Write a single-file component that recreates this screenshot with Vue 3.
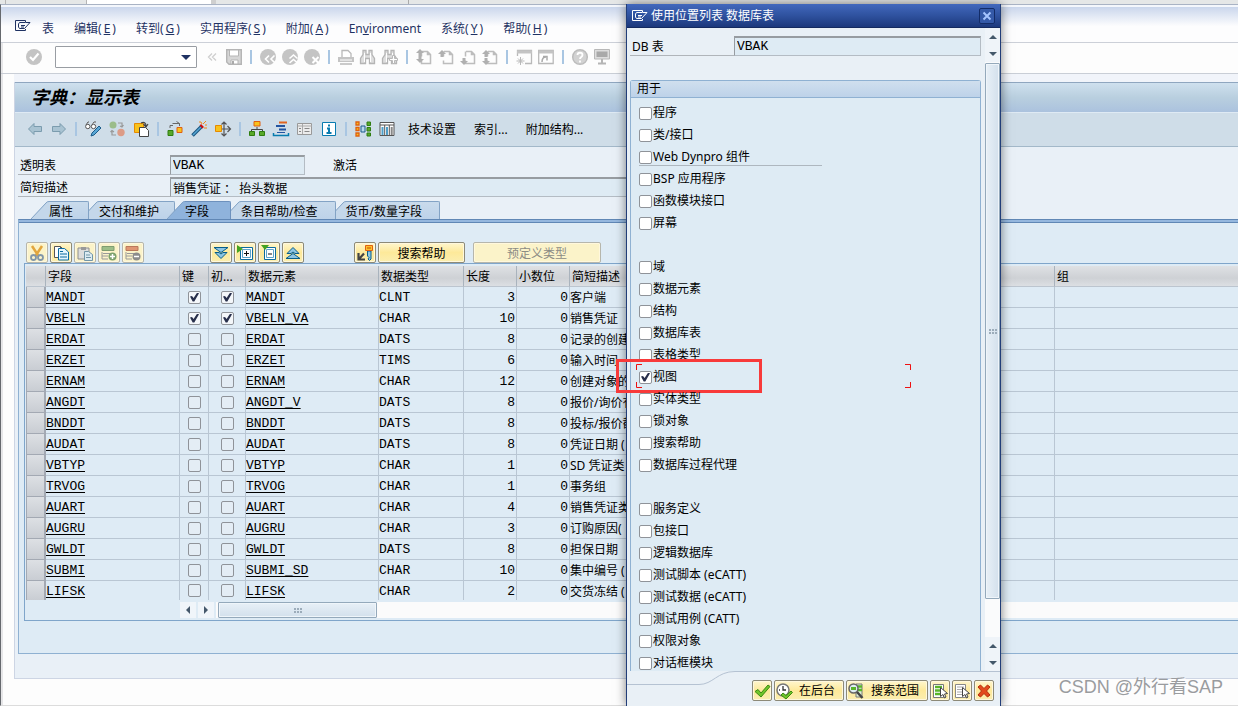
<script setup>
import { ref } from 'vue'

const menus = [
  { label: '表' },
  { label: '编辑', key: 'E' },
  { label: '转到', key: 'G' },
  { label: '实用程序', key: 'S' },
  { label: '附加', key: 'A' },
  { label: 'Environment', plain: true },
  { label: '系统', key: 'Y' },
  { label: '帮助', key: 'H' }
]

const page = '<path d="M6 2.5h5.500l3 3v9h-9v-3M5.500 7.500v-5M11.500 2.500v3h3" fill="none" stroke="#bdbdbd" stroke-width="1.500"/>'
const up = (x, y) => `<path d="M${x} ${y}l4 4h-2.500v3h-3v-3h-2.500z" fill="#b0b0b0"/>`
const down = (x, y) => `<path d="M${x} ${y}l4-4h-2.500v-3h-3v3h-2.500z" fill="#b0b0b0"/>`
const disc = '<circle cx="8" cy="8" r="8" fill="#c4c4c4"/>'
const binoculars = '<path d="M3 1.500h3v4h3v-4h3v4l2.500 4v5h-5v-5h-4v5h-5v-5L3 5.500z" fill="#dedede" stroke="#b5b5b5" stroke-width="1.300"/><path d="M4.500 4v9M10.500 4v9" stroke="#fff"/>'
const doc = (x, y) => `<path d="M${x + 0.5} ${y + 0.5}h6l3 3v8h-9z" fill="#fff" stroke="#555"/><path d="M${x + 6.5} ${y + 0.5}v3h3" fill="none" stroke="#555"/>`

const icons = {
  leave: '<path d="M10.500 4V2.500H.5v10h10V11" fill="none" stroke="currentColor"/><path d="M10.500 4.500H4.500L3.500 6v3l1 1.500h5L15 4.500zM6 7.500h4M6 9h3" fill="none" stroke="currentColor"/>',
  ok: disc + '<path d="M4 8l3 3 5.500-6.500" fill="none" stroke="#fff" stroke-width="2.200"/>',
  chevrons: '<path d="M8 4.500L4.500 8 8 11.500M12 4.500L8.500 8l3.500 3.500" fill="none" stroke="#cfcfcf" stroke-width="1.300"/>',
  save: '<path d="M.7.7h14.600v14.600H3L.7 13z" fill="#d6d6d6" stroke="#b5b5b5" stroke-width="1.400"/><path d="M3.500 1h9v6h-9z" fill="#fff" stroke="#b5b5b5"/><path d="M5 11h7v4H5z" fill="#fff" stroke="#b5b5b5"/><path d="M7 12v3" stroke="#aaa" stroke-width="2"/>',
  back: disc + '<path d="M9 6.500L5.500 10 9 13.500M14.500 6.500L11 10l3.500 3.500" fill="none" stroke="#fff" stroke-width="1.600"/>',
  exit: disc + '<path d="M7.500 9.500L11.500 6l4 3.500M7.500 14l4-3.500 4 3.500" fill="none" stroke="#fff" stroke-width="1.600"/>',
  cancel: disc + '<path d="M8.500 8l6 6M14.500 8l-6 6" stroke="#fff" stroke-width="2"/>',
  print: '<path d="M4 8V1.500h6l3 3V8" fill="#fff" stroke="#b9b9b9" stroke-width="1.300"/><path d="M0 8h16v5H0z" fill="#c4c4c4"/><path d="M2 11h12" stroke="#fff"/><path d="M2 15h12" stroke="#b9b9b9" stroke-width="1.500"/>',
  find: binoculars,
  findNext: binoculars + '<path d="M10.500 6.500h2v3h3v2h-3v3h-2v-3h-3v-2h3z" fill="#fff" stroke="#b9b9b9"/>',
  first: page + up(4, 0) + down(4, 14),
  prev: page + up(4, 1),
  next: page + down(4, 16),
  last: page + up(4, 1) + down(4, 16),
  session: '<path d="M1.500 7V1.500h14v13H9" fill="none" stroke="#b9b9b9" stroke-width="1.300"/><path d="M1 3h15" stroke="#c4c4c4" stroke-width="3"/><path d="M4.500 8v8M.5 12h8M2 9.500l5 5M7 9.500l-5 5" stroke="#b9b9b9"/>',
  shortcut: '<path d="M.7 1.500h14.500v13H.7z" fill="#fff" stroke="#b9b9b9" stroke-width="1.300"/><path d="M1 3h14" stroke="#c4c4c4" stroke-width="3"/><path d="M4 13c0-3 1-5 4-5M5 7.500h4v4" fill="none" stroke="#aaa" stroke-width="1.500"/>',
  help: '<circle cx="8" cy="8" r="7.300" fill="#d2d2d2" stroke="#bcbcbc" stroke-width="1.500"/><path d="M5.500 6c0-3 5-3 5 0 0 2-2.500 2-2.500 4M8 11.500v2" fill="none" stroke="#fff" stroke-width="1.800"/>',
  monitor: '<path d="M.5.500h15v9.500H.5z" fill="#ddd" stroke="#b8b8b8"/><path d="M2.500 2.500h11v5.500h-11z" fill="#a9a9a9"/><path d="M8 10v4M4 14.500h8" stroke="#b5b5b5" stroke-width="2"/>',
  arrowLeft: '<path d="M1.500 8l5.500-5.500v3h7.500v5H7v3z" fill="#a9c3d2" stroke="#7b9cae"/>',
  arrowRight: '<path d="M14.500 8L9 2.500v3H1.500v5H9v3z" fill="#a9c3d2" stroke="#7b9cae"/>',
  display: '<g fill="#fff" stroke="#555"><circle cx="2.800" cy="5.500" r="2.200"/><circle cx="8.500" cy="5.500" r="2.200"/><path d="M1 4l2-3h1M7 4l2-3h2"/></g><path d="M6 15l1-3 7-7 2 2-7 7z" fill="#58a6d4" stroke="#1c5c8a"/>',
  toggle: '<circle cx="4" cy="4" r="3.500" fill="#9bbd8a"/><circle cx="12" cy="11.500" r="3.700" fill="#dc9b86"/><path d="M9 2h4v4M11 5l2 1 1.500-2M7 14H3v-4M1.500 11L3 9.500 5 11" fill="none" stroke="#999" stroke-width="1.200"/>',
  other: '<path d="M1.500 2.500h9v9h-9z" fill="#f8c21c" stroke="#e68a00"/><path d="M6.500 6.500h6l3 3v6h-9z" fill="#fff" stroke="#444"/><path d="M8 2c3-1.500 5 0 5 3M10.500 3l2.500 3L15 3" fill="none" stroke="#444" stroke-width="1.200"/>',
  copyObj: '<path d="M1 9.500h5v5H1z" fill="#58a82a" stroke="#2f7d10"/><path d="M10 6.500h5v5h-5z" fill="#f8c21c" stroke="#e06010"/><path d="M3 7V4.500h3M5.500 2.500h7V5M9.500.5l3 2" fill="none" stroke="#666"/>',
  wand: '<path d="M1.500 14.500l9-9" stroke="#1a5680" stroke-width="3.500"/><path d="M2 14l8-8" stroke="#57a7d5" stroke-width="1.500"/><path d="M10 6l1.500-1.500" stroke="#d01010" stroke-width="4"/><path d="M9 2V0M13 7h3M12 3l3-3M14 4h2M10 1l1 2" stroke="#f08a18"/>',
  where: '<path d="M.5 4.500h6v6h-6z" fill="#f8c21c" stroke="#e68a00"/><path d="M7 8h8M9 1v14M6.500 3.500L9 1l2.500 2.500M6.500 12.500L9 15l2.500-2.500M12.500 5l3 3-3 3" fill="none" stroke="#555" stroke-width="1.200"/>',
  hierarchy: '<path d="M8 6v3M2.500 11V8.500h11V11" fill="none" stroke="#444"/><path d="M5 .5h6v4.500H5z" fill="#f8c21c" stroke="#e06010"/><path d="M.5 10.500h5v4h-5zM10.500 10.500h5v4h-5z" fill="#58a82a" stroke="#2f7d10"/>',
  append: '<path d="M6 1.500h8" stroke="#e06420" stroke-width="2"/><path d="M3 5h9M6 8.500h7" stroke="#2354a0" stroke-width="2"/><path d="M4 11.500h8" stroke="#2354a0"/><path d="M.5 12v2.500h15V12" fill="none" stroke="#077cae" stroke-width="1.500"/>',
  list: '<path d="M.5 2.500h14v11H.5z" fill="#ececec" stroke="#999"/><path d="M1 5h14M5.500 3v10" stroke="#aaa"/><path d="M7.500 7.500h5M7.500 10.500h5M2 7.500h2M2 10.500h2" stroke="#888"/>',
  info: '<path d="M1.500 1.500h13v13h-13z" fill="#fff" stroke="#087bb0"/><path d="M8 3.500v2M6 7.500h2V12M5.500 12h5" fill="none" stroke="#087bb0" stroke-width="2"/>',
  indexes: '<g fill="#f8c21c" stroke="#e06010" stroke-width="1.300"><path d="M1 1h3v3H1zM1 6.500h3v3H1zM1 12h3v3H1z"/></g><path d="M6 5h4v6H6z" fill="#b7d8ec" stroke="#1c5c8a"/><g fill="#58a82a" stroke="#2f7d10"><path d="M12 1h3.500v3.500H12zM12 6.500h3.500v3.500H12zM12 12h3.500v3H12z"/></g>',
  contents: '<path d="M1 1.500h14v13H1z" fill="#fff" stroke="#555"/><path d="M1 4h14M5.700 4v11M10.300 4v11" stroke="#555"/><path d="M3.500 6v8M8 6v8" stroke="#4d9dc8" stroke-width="2"/><path d="M12.700 6v8" stroke="#888" stroke-width="2"/>',
  cut: '<path d="M3 1l6.500 10M13 1L6.500 11" stroke="#e2a63e" stroke-width="2.500"/><g fill="none" stroke="#8196a8" stroke-width="1.800"><circle cx="4.500" cy="12.500" r="2.500"/><circle cx="11.500" cy="12.500" r="2.500"/></g>',
  copy: doc(1, 1) + '<path d="M5.500 3.500h6l4 3.500v8h-10z" fill="#e6f5fd" stroke="#0b6ba0"/><path d="M7 6.500h3M7 9h7M7 12h7" stroke="#0b6ba0"/>',
  paste: '<path d="M1 3h11v11H1z" fill="#ddd" stroke="#8f8f8f"/><path d="M4 2h5v3H4z" fill="#999"/><path d="M7.500 6.500h4l4 3v6h-8z" fill="#dcebf2" stroke="#7195a8"/><path d="M9 10h4M9 12.500h5" stroke="#7195a8"/>',
  addRow: '<path d="M1 1.500h12v4H1z" fill="#9cbe88" stroke="#7f9d70"/><path d="M1 7v7h6M2 8.500h9M1 11h6" fill="none" stroke="#999"/><circle cx="11.500" cy="11.500" r="4" fill="#7da26d"/><path d="M11.500 9v5M9 11.500h5" stroke="#fff" stroke-width="1.500"/>',
  delRow: '<path d="M1 1.500h12v4H1z" fill="#e09672" stroke="#ba795c"/><path d="M1 7v7h6M2 8.500h9M1 11h6" fill="none" stroke="#999"/><circle cx="11.500" cy="11.500" r="4" fill="#8c8c8c"/><path d="M9 11.500h5" stroke="#fff" stroke-width="1.500"/>',
  dblDown: '<path d="M1 2.500h14l-7 5z" fill="#8dc5e4" stroke="#075d89"/><path d="M2 7.500h4l2 1.500 2-1.500h4l-6 6z" fill="#8dc5e4" stroke="#075d89"/>',
  dblUp: '<path d="M1 13.500h14l-7-5z" fill="#8dc5e4" stroke="#075d89"/><path d="M2 8.500h4L8 7l2 1.500h4l-6-6z" fill="#8dc5e4" stroke="#075d89"/>',
  expand: '<path d="M3.500 2.500h12v12h-12z" fill="#fff" stroke="#0b6ba0"/><path d="M5.500 4.500h8v8h-8z" fill="#fff" stroke="#5ea4c8"/><path d="M7 8.500h5M9.500 6v5" stroke="#111"/><path d="M0 0l6 4-6 4z" fill="#45a321"/>',
  collapse: '<path d="M3.500 2.500h11v12h-11z" fill="#fff" stroke="#0b6ba0"/><path d="M5.500 4.500h7v8h-7z" fill="#fff" stroke="#5ea4c8"/><path d="M7 9h4" stroke="#111"/><path d="M0 0h8L4 5z" fill="#45a321"/>',
  key: '<path d="M7 8.500L2 14M1.500 8v6.500H8" fill="none" stroke="#444" stroke-width="2.200"/><path d="M10.500 6h3.500v8l-1.500 1.500L11 14l1-1.500-1.500-1.500z" fill="#8dc5e4" stroke="#075d89"/><path d="M8.500.500h7v5h-7z" fill="#fbc02d" stroke="#e06010"/><path d="M10 3h4" stroke="#c44f00"/>',
  check: '<path d="M1 8.500l3-2 3 3.500L14 2l2 1.500L7 14z" fill="#6fc52b" stroke="#3b8a10"/>',
  background: '<circle cx="7" cy="7" r="6" fill="#fff" stroke="#777" stroke-width="1.500"/><path d="M7 3v4h3M3 7h1" fill="none" stroke="#333" stroke-width="1.300"/><path d="M5 12l2-2 3 2.500L15 8l1.500 1.500L10 16z" fill="#6fc52b" stroke="#3b8a10"/>',
  scope: '<path d="M8 1h6v13H8z" fill="#dff2d5" stroke="#777"/><path d="M9 3.500h5M9 7h5" stroke="#5ab52a" stroke-width="2.500"/><circle cx="5.500" cy="5.500" r="4.500" fill="#dfeef2" stroke="#666" stroke-width="1.500"/><path d="M9 9l5.500 6" stroke="#444" stroke-width="2.500"/><path d="M3 5.500h5" stroke="#5ab52a" stroke-width="3"/>',
  selectAll: '<path d="M1.500 1.500h10v13h-10z" fill="#fff" stroke="#777"/><path d="M3 4h7M3 7.500h6M3 11h6" stroke="#5ab52a" stroke-width="2.500"/><path d="M8.500 4.500v9l2.500-2 1.500 3.500 1.500-1-1.500-3 3-.5z" fill="#fff" stroke="#444"/>',
  deselect: '<path d="M1.500 1.500h10v13h-10z" fill="#fff" stroke="#888"/><path d="M3 4h7M3 6.500h5M3 9h5M3 11.500h5" stroke="#aaa"/><path d="M8.500 4.500v9l2.500-2 1.500 3.500 1.500-1-1.500-3 3-.5z" fill="#fff" stroke="#444"/>',
  cross: '<path d="M2 4l2.500-2L8 5.500 11.500 2 14 4l-3.500 4 3.500 4-2.500 2L8 10.500 4.500 14 2 12l3.500-4z" fill="#e24a1c" stroke="#b42c08"/>'
}

const systemBar = [
  ['save', '保存'], null,
  ['back', '返回'], ['exit', '退出'], ['cancel', '取消'], null,
  ['print', '打印'], ['find', '查找'], ['findNext', '查找下一个'], null,
  ['first', '第一页'], ['prev', '上一页'], ['next', '下一页'], ['last', '最后一页'], null,
  ['session', '新建会话'], ['shortcut', '创建快捷方式'], null,
  ['help', '帮助'], ['monitor', '定制本地布局']
]
const appBar = [
  ['arrowLeft', '上一对象'], ['arrowRight', '下一对象'], null,
  ['display', '显示/更改'], ['toggle', '激活/未激活'], ['other', '其他对象'], null,
  ['copyObj', '检查'], ['wand', '激活'], ['where', '使用位置列表'], null,
  ['hierarchy', '层次'], ['append', '追加'], ['list', '列表'], ['info', '信息'], null,
  ['indexes', '图形'], ['contents', '内容']
]
const appTexts = ['技术设置', '索引...', '附加结构...']

const tabs = ['属性', '交付和维护', '字段', '条目帮助/检查', '货币/数量字段']
const activeTab = ref(2)

const editTools = [['cut', '剪切'], ['copy', '复制'], ['paste', '粘贴'], ['addRow', '插入行'], ['delRow', '删除行']]
const treeTools = [['dblDown', '全部展开'], ['expand', '展开'], ['collapse', '折叠'], ['dblUp', '全部折叠']]

const columns = ['字段', '键', '初...', '数据元素', '数据类型', '长度', '小数位', '简短描述', '组']
const rows = ref([
  { name: 'MANDT', key: true, el: 'MANDT', type: 'CLNT', len: 3, text: '客户端' },
  { name: 'VBELN', key: true, el: 'VBELN_VA', type: 'CHAR', len: 10, text: '销售凭证' },
  { name: 'ERDAT', key: false, el: 'ERDAT', type: 'DATS', len: 8, text: '记录的创建' },
  { name: 'ERZET', key: false, el: 'ERZET', type: 'TIMS', len: 6, text: '输入时间' },
  { name: 'ERNAM', key: false, el: 'ERNAM', type: 'CHAR', len: 12, text: '创建对象的' },
  { name: 'ANGDT', key: false, el: 'ANGDT_V', type: 'DATS', len: 8, text: '报价/询价有' },
  { name: 'BNDDT', key: false, el: 'BNDDT', type: 'DATS', len: 8, text: '投标/报价截' },
  { name: 'AUDAT', key: false, el: 'AUDAT', type: 'DATS', len: 8, text: '凭证日期 (' },
  { name: 'VBTYP', key: false, el: 'VBTYP', type: 'CHAR', len: 1, text: 'SD 凭证类' },
  { name: 'TRVOG', key: false, el: 'TRVOG', type: 'CHAR', len: 1, text: '事务组' },
  { name: 'AUART', key: false, el: 'AUART', type: 'CHAR', len: 4, text: '销售凭证类' },
  { name: 'AUGRU', key: false, el: 'AUGRU', type: 'CHAR', len: 3, text: '订购原因(' },
  { name: 'GWLDT', key: false, el: 'GWLDT', type: 'DATS', len: 8, text: '担保日期' },
  { name: 'SUBMI', key: false, el: 'SUBMI_SD', type: 'CHAR', len: 10, text: '集中编号 (' },
  { name: 'LIFSK', key: false, el: 'LIFSK', type: 'CHAR', len: 2, text: '交货冻结 (' }
])

const usageGroups = ref([
  ['程序', '类/接口', 'Web Dynpro 组件', 'BSP 应用程序', '函数模块接口', '屏幕'],
  ['域', '数据元素', '结构', '数据库表', '表格类型', '视图', '实体类型', '锁对象', '搜索帮助', '数据库过程代理'],
  ['服务定义', '包接口', '逻辑数据库', '测试脚本 (eCATT)', '测试数据 (eCATT)', '测试用例 (CATT)', '权限对象', '对话框模块']
].map(g => g.map(label => ({ label, on: label === '视图' }))))
</script>

<template>
  <div class="desktop">
    <div class="strip"><span class="strip-a"></span><span class="strip-b"></span><span class="strip-c"></span></div>

    <main class="window">
      <nav class="menu" aria-label="菜单">
        <svg class="icon" viewBox="0 0 16 16" v-html="icons.leave"></svg>
        <a v-for="m in menus" :key="m.label" href="#"><template v-if="m.plain">En<u>v</u>ironment</template><template v-else>{{ m.label }}<template v-if="m.key">(<span class="mnemonic">{{ m.key }}</span>)</template></template></a>
      </nav>

      <div class="sysbar">
        <button class="tool" aria-label="回车"><svg class="icon" viewBox="0 0 16 16" v-html="icons.ok"></svg></button>
        <div class="command">
          <input type="text" aria-label="命令">
          <button aria-label="命令历史"><i class="tri tri-menu"></i></button>
        </div>
        <button class="tool" aria-label="隐藏命令栏"><svg class="icon" viewBox="0 0 16 16" v-html="icons.chevrons"></svg></button>
        <template v-for="(t, i) in systemBar" :key="i">
          <button v-if="t" class="tool" :aria-label="t[1]"><svg class="icon" viewBox="0 0 16 16" v-html="icons[t[0]]"></svg></button>
          <span v-else class="sep"></span>
        </template>
      </div>

      <section class="frame">
        <h1>字典：显示表</h1>
        <div class="appbar">
          <template v-for="(t, i) in appBar" :key="i">
            <button v-if="t" class="tool" :aria-label="t[1]"><svg class="icon" viewBox="0 0 16 16" v-html="icons[t[0]]"></svg></button>
            <span v-else class="sep"></span>
          </template>
          <button v-for="t in appTexts" :key="t" class="text-tool">{{ t }}</button>
        </div>

        <div class="body">
          <div class="field-row">
            <label for="tab-name">透明表</label>
            <input id="tab-name" class="name" type="text" value="VBAK" readonly>
            <span class="status">激活</span>
          </div>
          <div class="field-row">
            <label for="tab-desc">简短描述</label>
            <input id="tab-desc" class="desc" type="text" value="销售凭证 ： 抬头数据" readonly>
          </div>

          <div class="tabs" role="tablist">
            <button v-for="(t, i) in tabs" :key="t" role="tab" :class="['tab', `tab-${i}`, { active: i === activeTab }]" :aria-selected="i === activeTab" @click="activeTab = i">
              <svg class="slant" viewBox="0 0 18 18"><path class="slant-fill" d="M0 18L15 1.500Q16 0 18 0V18z" /><path class="slant-line" d="M0 18L15 2Q16 .5 18 .5" /></svg>
              <span>{{ t }}</span>
            </button>
          </div>

          <div class="panel">
            <div class="grid-tools">
              <div class="group">
                <button v-for="t in editTools" :key="t[0]" :class="['btn', 'square', { dim: t[0] !== 'copy' }]" :aria-label="t[1]"><svg class="icon" viewBox="0 0 16 16" v-html="icons[t[0]]"></svg></button>
              </div>
              <div class="group tree">
                <button v-for="t in treeTools" :key="t[0]" class="btn square" :aria-label="t[1]"><svg class="icon" viewBox="0 0 16 16" v-html="icons[t[0]]"></svg></button>
              </div>
              <div class="group help">
                <button class="btn square" aria-label="外键"><svg class="icon" viewBox="0 0 16 16" v-html="icons.key"></svg></button>
                <button class="btn search">搜索帮助</button>
              </div>
              <button class="btn predefined dim" disabled>预定义类型</button>
            </div>

            <div class="grid">
              <table>
                <colgroup>
                  <col class="c-sel"><col class="c-name"><col class="c-key"><col class="c-init"><col class="c-el">
                  <col class="c-type"><col class="c-len"><col class="c-dec"><col class="c-text"><col>
                </colgroup>
                <thead>
                  <tr><th></th><th v-for="c in columns" :key="c">{{ c }}</th></tr>
                </thead>
                <tbody>
                  <tr v-for="r in rows" :key="r.name">
                    <td class="sel"></td>
                    <td class="mono"><a href="#">{{ r.name }}</a></td>
                    <td class="tick"><input v-model="r.key" type="checkbox" class="box" :aria-label="r.name + ' 键'"></td>
                    <td class="tick"><input v-model="r.key" type="checkbox" class="box" :aria-label="r.name + ' 初始值'"></td>
                    <td class="mono"><a href="#">{{ r.el }}</a></td>
                    <td class="mono">{{ r.type }}</td>
                    <td class="mono num">{{ r.len }}</td>
                    <td class="mono num">0</td>
                    <td class="short">{{ r.text }}</td>
                    <td></td>
                  </tr>
                </tbody>
              </table>
              <div class="hscroll">
                <button aria-label="向左"><i class="tri tri-left"></i></button>
                <button aria-label="向右"><i class="tri tri-right"></i></button>
                <div class="htrack"><div class="hthumb"><i class="grip"></i></div></div>
              </div>
            </div>
          </div>
        </div>
      </section>
    </main>

    <section class="dialog" role="dialog" aria-labelledby="dlg-title">
      <header>
        <svg class="icon" viewBox="0 0 16 16" v-html="icons.leave"></svg>
        <h2 id="dlg-title">使用位置列表 数据库表</h2>
        <button aria-label="关闭"><svg viewBox="0 0 10 10"><path d="M1.500 1.500l7 7M8.500 1.500l-7 7" /></svg></button>
      </header>
      <div class="dlg-main">
        <div class="dlg-content">
          <div class="db-row">
            <label for="db-table">DB 表</label>
            <input id="db-table" type="text" value="VBAK" readonly>
          </div>
          <fieldset class="usage">
            <legend>用于</legend>
            <ul v-for="(g, gi) in usageGroups" :key="gi">
              <li v-for="u in g" :key="u.label" :class="{ ruled: u.label.startsWith('Web') }">
                <label><input v-model="u.on" type="checkbox" class="box">{{ u.label }}</label>
                <template v-if="u.label === '视图'">
                  <svg class="bracket" viewBox="0 0 6 24"><path d="M6 .5H.5V6M.5 18v5.500H6" /></svg>
                  <svg class="bracket right" viewBox="0 0 6 24"><path d="M0 .5h5.500V6M5.500 18v5.500H0" /></svg>
                  <span class="highlight"></span>
                </template>
              </li>
            </ul>
          </fieldset>
        </div>
        <div class="vscroll">
          <button aria-label="向上"><i class="tri tri-up"></i></button>
          <button aria-label="向下"><i class="tri tri-down"></i></button>
          <div class="vtrack"><div class="vthumb"><i class="grip"></i></div></div>
          <button aria-label="向上翻"><i class="tri tri-up"></i></button>
          <button aria-label="向下翻"><i class="tri tri-down"></i></button>
        </div>
      </div>
      <footer>
        <svg class="curve" viewBox="0 0 108 14"><path d="M0 13.500H72C86 13.500 90 .5 108 .5" /></svg>
        <div class="actions">
          <button class="btn short-btn" aria-label="继续"><svg class="icon" viewBox="0 0 16 16" v-html="icons.check"></svg></button>
          <button class="btn wide-a"><svg class="icon" viewBox="0 0 16 16" v-html="icons.background"></svg>在后台</button>
          <button class="btn wide-b"><svg class="icon" viewBox="0 0 16 16" v-html="icons.scope"></svg>搜索范围</button>
          <button class="btn short-btn" aria-label="全选"><svg class="icon" viewBox="0 0 16 16" v-html="icons.selectAll"></svg></button>
          <button class="btn short-btn" aria-label="取消全选"><svg class="icon" viewBox="0 0 16 16" v-html="icons.deselect"></svg></button>
          <button class="btn short-btn" aria-label="取消"><svg class="icon" viewBox="0 0 16 16" v-html="icons.cross"></svg></button>
        </div>
      </footer>
    </section>

    <div class="watermark">CSDN @外行看SAP</div>
  </div>
</template>

<style>
body { background: #fdfdfd; }
</style>

<style scoped>
* { box-sizing: border-box; }
.desktop {
  position: relative;
  display: flex;
  flex-direction: column;
  min-height: 100vh;
  overflow: hidden;
  font: 12px/16px "Noto Sans", "Noto Sans CJK SC", sans-serif;
  color: #000;
}
button, input { font: inherit; color: inherit; margin: 0; padding: 0; border: 0; background: none; }
a { color: inherit; text-decoration: none; }
.icon { display: block; width: 16px; height: 16px; flex: none; overflow: visible; }

.strip { display: flex; height: 4px; background: #e5e7e7; }
.strip-a { width: 82px; margin-left: 5px; border: solid #b5b5b5; border-width: 0 1px; }
.strip-b { width: 129px; background: #fff; border-right: 5px solid #cfcfcf; }
.strip-c { width: 193px; border-right: 1px solid #aaa; }

.window {
  flex: 1;
  display: flex;
  flex-direction: column;
  border-left: 1px solid #66696e;
  border-top: 1px solid #a9b3c4;
  border-bottom: 1px solid #dcdcdc;
  background: #fdfdfd;
  box-shadow: inset 2px 0 #e6e6e8;
}
.menu {
  display: flex;
  align-items: center;
  gap: 20px;
  height: 38px;
  padding: 8px 0 0 14px;
  border-top: 2px solid #f4f7fc;
  border-bottom: 1px solid #ccd0d8;
  background: linear-gradient(#cad6ec, #fdfdfe 55%);
  color: #1f3263;
}
.menu .icon { margin: -6px -9px 0 0; }
.mnemonic { padding: 0 2px; text-decoration: underline; }

.sysbar {
  display: flex;
  align-items: center;
  gap: 6px;
  height: 31px;
  padding: 0 0 2px 25px;
  border-bottom: 1px solid #c9ced6;
}
.sysbar .sep { margin: 0 2px; }
.tool { flex: none; width: 16px; height: 16px; }
.sep { flex: none; width: 2px; height: 14px; background: #a9c6e2; }
.command {
  display: flex;
  align-items: center;
  width: 142px;
  height: 22px;
  margin: 0 1px 0 7px;
  border: 1px solid #999da3;
  border-radius: 1px;
  background: #fff;
}
.command input { flex: 1; min-width: 0; height: 100%; outline: 0; padding-left: 4px; }
.command button { width: 20px; height: 20px; display: grid; place-items: center; }

.tri { display: block; border: solid transparent; width: 0; height: 0; }
.tri-menu { border-width: 5px 5px 0; border-top-color: #1f3263; }
.tri-left { border-width: 4px 4px 4px 0; border-right-color: #44586b; }
.tri-right { border-width: 4px 0 4px 4px; border-left-color: #44586b; }
.tri-up { border-width: 0 4px 4px; border-bottom-color: #44586b; }
.tri-down { border-width: 4px 4px 0; border-top-color: #44586b; }

.frame {
  margin: 8px 0 0 13px;
  border: solid #cdd5e4;
  border-width: 0 0 1px 1px;
  background: #e9f0f7;
  box-shadow: 0 -8px #f1f4fa;
}
h1 {
  margin: 0;
  height: 31px;
  padding: 0 0 4px 16px;
  border-top: 1px solid #8fa6bf;
  border-bottom: 1px solid #dfeaf4;
  background: linear-gradient(#cfe0ee, #b9cfdf 50%, #abc2de);
  font: italic bold 18px/26px "Noto Sans CJK SC", sans-serif;
}
.appbar {
  display: flex;
  align-items: center;
  gap: 8px;
  height: 34px;
  padding: 0 0 2px 12px;
  border-bottom: 1px solid #a3b8c9;
  background: #cfdde8;
}
.text-tool { margin: 2px 5px 0; white-space: nowrap; }
.text-tool:first-of-type { margin-left: 4px; }

.body { padding: 8px 0 24px 3px; }
.field-row { display: flex; height: 20px; margin-bottom: 2px; }
.field-row label { width: 152px; padding: 3px 0 0 2px; border-bottom: 1px solid #b0b5ba; }
.field-row input, .db-row input {
  height: 20px;
  padding: 0 2px;
  border: 1px solid #b4bcc4;
  border-top: 2px solid #979ca1;
  border-left-color: #979ca1;
  background: #deebf4;
  outline: 0;
}
.field-row .name, .db-row input, .mono { font-family: "Liberation Mono", "Noto Sans CJK SC", monospace; font-size: 13px; }
.field-row .name { width: 135px; }
.field-row .desc { width: 62%; }
.status { padding: 3px 0 0 28px; }

.tabs { display: flex; height: 18px; margin-top: 4px; padding-left: 13px; }
.tab { position: relative; display: flex; z-index: 1; height: 18px; margin-left: -8px; white-space: nowrap; }
.tab-0 { margin-left: 0; z-index: 5; }
.tab-1 { z-index: 4; }
.tab-2 { z-index: 3; }
.tab-3 { z-index: 2; }
.tab.active { z-index: 6; }
.slant { width: 18px; height: 18px; flex: none; }
.slant-fill { fill: #c4d7ea; }
.slant-line { fill: none; stroke: #83a3c5; }
.tab span {
  height: 18px;
  padding: 2px 15px 0 0;
  border-top: 1px solid #83a3c5;
  border-right: 1px solid #83a3c5;
  border-top-right-radius: 2px;
  background: linear-gradient(#c9dbec, #bdd2e9);
}
.tab-3 span, .tab-4 span { padding-right: 17px; }
.tab.active span { padding-right: 21px; background: #8fb3dc; border-color: #6d91bd; }
.active .slant-fill { fill: #8fb3dc; }

.panel {
  padding: 22px 0 32px 5px;
  border: solid #8fb1d2;
  border-width: 1px 0 1px 1px;
  border-top-color: #6087b5;
  background: #deebf5;
  box-shadow: inset 0 2px #95b7de, inset 0 3px #6087b5;
}
.grid-tools { display: flex; height: 21px; padding-left: 2px; }
.group { display: flex; gap: 2px; }
.tree { margin-left: 66px; }
.help { margin: 0 8px 0 50px; }
.btn {
  display: flex;
  align-items: center;
  justify-content: center;
  height: 21px;
  border: 1px solid #8d8a78;
  border-radius: 2px;
  background: linear-gradient(#fff6cd, #fde99a 50%, #fbeeb0);
  box-shadow: inset 0 0 0 1px #fff8dd;
  white-space: nowrap;
}
.btn.dim { border-color: #b6b6ac; background: #fbf3c9; color: #8c8c85; }
.square { width: 22px; }
.search { width: 87px; padding-top: 2px; }
.predefined { width: 128px; padding-top: 2px; }
.grid { padding: 2px 0 2px 1px; border: solid #7fa5ca; border-width: 1px 0 1px 1px; }

table { width: 100%; table-layout: fixed; border-collapse: separate; border-spacing: 0; }
.c-sel { width: 20px; }
.c-name { width: 134px; }
.c-key { width: 29px; }
.c-init { width: 37px; }
.c-el { width: 133px; }
.c-type { width: 85px; }
.c-len, .c-dec { width: 53px; }
.c-text { width: 485px; }
th {
  height: 21px;
  padding: 2px 0 0 2px;
  border-right: 1px solid #a9b3bd;
  border-bottom: 1px solid #bcc5cf;
  background: linear-gradient(#dfe1e4, #ced1d5 60%, #dcdfe3);
  font-weight: normal;
  text-align: left;
  white-space: nowrap;
}
td {
  height: 21px;
  padding: 0 1px 0 0;
  border-right: 1px solid #b9c6d3;
  border-bottom: 1px solid #b9c6d3;
  overflow: hidden;
  white-space: nowrap;
  line-height: 16px;
}
td:last-child, th:last-child { border-right: 0; }
tbody tr:last-child td { height: 19px; border-bottom: 0; }
.sel { border: 1px solid #a3a9b3; border-width: 0 2px 1px 1px; background: linear-gradient(#dde0e4, #c9cdd3); }
.mono { padding-top: 2px; }
.mono a { text-decoration: underline; text-underline-offset: 2px; }
.num { text-align: right; }
.short { padding-top: 2px; }
.tick { padding: 0 0 0 1px; }
.box {
  appearance: none;
  flex: none;
  position: relative;
  width: 13px;
  height: 13px;
  border: 1px solid #8f9399;
  border-radius: 2px;
  background: #fff;
}
.tick .box { display: block; margin: 0 auto; background: #e4edf5; }
.tick .box:checked { background: #f4f7fa; }
.box:checked::before {
  content: "";
  position: absolute;
  inset: 1px;
  background: #28304c;
  clip-path: polygon(0 45%, 22% 38%, 40% 62%, 80% 0, 100% 8%, 48% 100%, 30% 100%);
}

.hscroll { display: flex; height: 16px; margin: 2px 0 0 154px; gap: 2px; }
.hscroll button { width: 16px; display: grid; place-items: center; background: #f0f5fa; }
.htrack { flex: 1; padding-left: 2px; background: #fbfbfb; }
.hthumb, .vthumb { display: grid; place-items: center; border: 1px solid #94a9bb; border-radius: 1px; background: linear-gradient(#e8f0f7, #d3e0ec); box-shadow: inset 0 0 0 1px #eff5fa; }
.hthumb { width: 159px; height: 16px; }
.grip { width: 8px; height: 5px; background: radial-gradient(circle at 1px 1px, #9cacba 1px, transparent 1px) 0 0 / 3px 3px; }

.dialog {
  position: absolute;
  top: 4px;
  bottom: 0;
  left: 626px;
  width: 375px;
  z-index: 10;
  display: flex;
  flex-direction: column;
  border: solid #213d78;
  border-width: 0 1px;
  background: #e9f0f6;
  box-shadow: 0 0 10px rgba(0, 0, 0, .5);
}
.dialog header {
  display: flex;
  flex: none;
  align-items: center;
  gap: 3px;
  height: 24px;
  padding: 0 5px;
  border-bottom: 1px solid #142a60;
  background: linear-gradient(#4268bd, #2f529f 50%, #1c387c);
  color: #fff;
}
h2 { flex: 1; margin: 0; font-size: 12px; line-height: 16px; font-weight: normal; }
.dialog header button { width: 16px; height: 16px; display: grid; place-items: center; border: 1px solid #132c68; border-radius: 2px; background: #3459a8; }
.dialog header svg:not(.icon) { width: 10px; height: 10px; fill: none; stroke: #a5c4ff; stroke-width: 2; }
.dlg-main { flex: 1; display: flex; gap: 4px; min-height: 0; }
.dlg-content { flex: 1; display: flex; flex-direction: column; min-height: 0; padding: 8px 0 0 3px; }
.db-row { display: flex; flex: none; height: 20px; }
.db-row label { width: 104px; padding: 3px 0 0 2px; border-bottom: 1px solid #b0b5ba; }
.db-row input { flex: 1; min-width: 0; }
.usage {
  flex: 1;
  min-width: 0;
  min-height: 0;
  margin: 24px 0 0;
  padding: 0;
  border: 1px solid #8fb1d2;
  border-bottom: 0;
  border-radius: 3px 3px 0 0;
  background: #deebf4;
}
.usage legend {
  float: left;
  width: 100%;
  height: 17px;
  padding: 0 6px;
  border-bottom: 1px solid #8fb1d2;
  background: linear-gradient(#d0dfee, #bdd2e9);
}
ul { clear: both; margin: 0; padding: 0 0 22px 8px; list-style: none; }
legend + ul { padding-top: 4px; }
ul:last-child { padding-bottom: 0; }
li { position: relative; height: 22px; }
li label { display: flex; align-items: center; gap: 1px; height: 22px; }
.ruled { background: linear-gradient(#aeb7bf, #aeb7bf) 0 19px / 183px 1px no-repeat; }
.bracket { position: absolute; left: -3px; top: -2px; width: 6px; height: 24px; fill: none; stroke: #e11; }
.bracket.right { left: 266px; }
.highlight { position: absolute; left: -23px; top: -7px; width: 146px; height: 34px; border: 3px solid #f83a3a; }

.vscroll { display: flex; flex-direction: column; width: 15px; }
.vscroll button { flex: none; height: 17px; display: grid; place-items: center; background: #eff4f9; }
.vtrack { flex: 1; padding: 1px 0 38px; background: #fafbfc; }
.vthumb { height: 100%; background: linear-gradient(90deg, #e8f0f7, #d3e0ec); }

.dialog footer { display: flex; flex: none; height: 35px; }
.curve { flex: none; width: 108px; height: 14px; fill: none; stroke: #b5c2d2; }
.actions { flex: 1; display: flex; justify-content: flex-end; gap: 2px; padding: 8px 6px 0 0; border-top: 1px solid #b5c2d2; }
.short-btn { width: 20px; }
.wide-a, .wide-b { justify-content: flex-start; gap: 7px; padding-left: 1px; }
.wide-a { width: 70px; }
.wide-b { width: 82px; }

.watermark {
  position: absolute;
  right: 15px;
  bottom: 6px;
  font: 18px/26px "Liberation Sans", "Noto Sans CJK SC", sans-serif;
  color: #9a9c9f;
  text-shadow: 1px 1px #fff;
}
</style>
